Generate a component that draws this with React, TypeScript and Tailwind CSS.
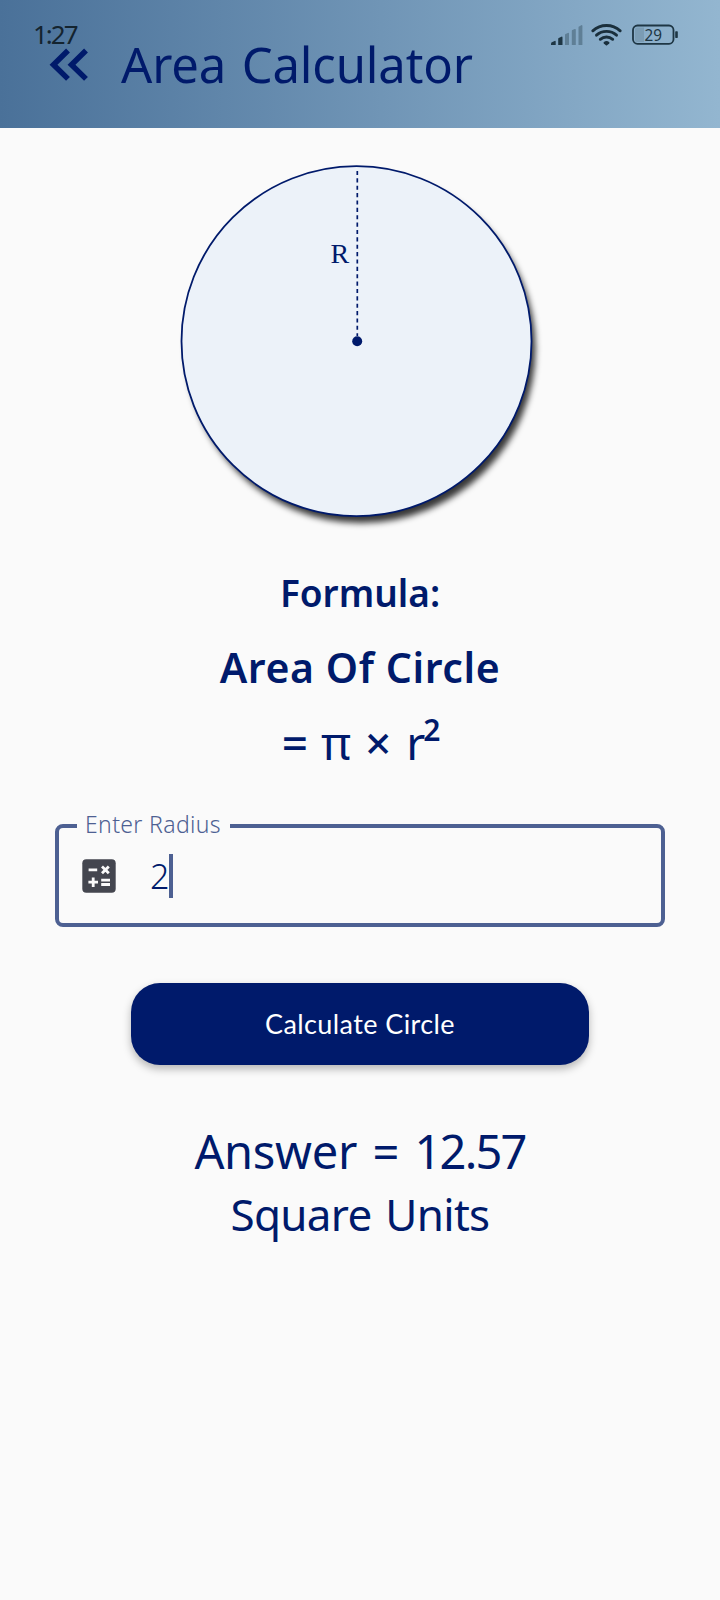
function StatusIcons() {
  return (
    <svg width="130" height="26" viewBox="0 0 130 26" fill="none" aria-hidden="true">
      <g fill="#1e3644">
        <path d="M1 21v-1.500a1.500 1.500 0 0 1 .8-1.200l2.800-1.400a.8.800 0 0 1 1.100.7V21z" />
        <path d="M8.200 21v-6a1 1 0 0 1 .6-.9l2.600-1.400a.8.800 0 0 1 1.100.7V21z" />
      </g>
      <g fill="#5f7f96">
        <path d="M15 21V11a1 1 0 0 1 .6-.9l2.300-1.200a.8.800 0 0 1 1.100.7V21z" />
        <path d="M21.800 21V7a1 1 0 0 1 .6-.9L24.700 5a.8.800 0 0 1 1.100.7V21z" />
        <path d="M28.500 21V3.300a1 1 0 0 1 .6-.9l2.200-1.200a.8.800 0 0 1 1.100.7V21z" />
      </g>
      <g stroke="#1a2f3c" strokeWidth="2.900" strokeLinecap="round">
        <path d="M42.800 6.800a20.500 20.500 0 0 1 27.400 0" />
        <path d="M46.500 11.200a15 15 0 0 1 20 0" />
        <path d="M50.300 15.300a9.500 9.500 0 0 1 12.400 0" />
      </g>
      <path d="M55.900 21.300l-2.100-1.900a1 1 0 0 1 .1-1.400a4 4 0 0 1 5.200 0a1 1 0 0 1 .1 1.400l-2.100 1.900a.9.900 0 0 1-1.200 0z" fill="#1a2f3c" />
      <path d="M87 3.500h7v14.500h-7a2 2 0 0 1-2-2v-10.500a2 2 0 0 1 2-2z" fill="#7b9cb4" />
      <rect x="83" y="1.500" width="40.500" height="18.300" rx="4.500" stroke="#1e3644" strokeWidth="1.800" />
      <rect x="125.200" y="7.300" width="2.600" height="6.600" rx="0.600" fill="#1e3644" />
      <text x="94.500" y="16.700" fontFamily="Noto Sans, sans-serif" fontSize="16.500" textLength="17.500" lengthAdjust="spacingAndGlyphs" fill="#1e3644">
        29
      </text>
    </svg>
  );
}

function Header() {
  return (
    <header className="relative h-32 bg-linear-to-r from-[#4a7199] to-[#93b6d0] pt-[32px]">
      <div className="absolute inset-x-0 top-[24px] flex items-start justify-between pl-[33px] pr-[40px] text-[#14242f]">
        <span className="-mt-[2px] text-[26px] leading-[24px] tracking-[-2px]">1:27</span>
        <StatusIcons />
      </div>
      <div className="flex items-start">
        <svg className="ml-[48px] mt-[15px] shrink-0" width="42" height="36" viewBox="0 0 42 36" fill="none" stroke="#001a6b" strokeWidth="5.500" aria-hidden="true">
          <path d="M20 3.500L5.500 17.700L20 31.900M38 3.500L23.500 17.700L38 31.900" />
        </svg>
        <h1 className="ml-[31px] whitespace-nowrap text-[49px] leading-[64px] tracking-[-0.150px] [word-spacing:3px]">Area Calculator</h1>
      </div>
    </header>
  );
}

function CircleFigure() {
  return (
    <svg className="block" width="720" height="420" viewBox="0 0 720 420" aria-hidden="true">
      <defs>
        <filter id="shade" x="-10%" y="-10%" width="120%" height="125%">
          <feGaussianBlur stdDeviation="3.200" />
        </filter>
      </defs>
      <circle cx="361" cy="220.500" r="174.500" fill="#000" fillOpacity="0.780" filter="url(#shade)" />
      <circle cx="356.500" cy="213.200" r="175" fill="#ecf2f9" stroke="#001a6b" strokeWidth="1.800" />
      <path d="M357.300 43V208" stroke="#001a6b" strokeWidth="1.700" strokeDasharray="4.100 3.270" />
      <circle cx="357.200" cy="213.300" r="5" fill="#001a6b" />
      <text x="330.500" y="134.500" fontFamily="Liberation Serif, serif" fontSize="28" fill="#001a6b">
        R
      </text>
    </svg>
  );
}

function CalculatorIcon() {
  return (
    <svg width="34" height="34" viewBox="0 0 34 34" fill="none" stroke="#fafafa" strokeWidth="2.800" aria-hidden="true">
      <rect x="0.300" y="0.300" width="33.400" height="33.400" rx="4" fill="#44464f" stroke="none" />
      <path d="M6.600 10.900h8.600M20 7.400l6.800 6.800M26.800 7.400l-6.800 6.800M6.400 23.200h9.600M11.200 18.400v9.600M19.200 21.100h8.800M19.200 25.500h8.800" />
    </svg>
  );
}

export default function App() {
  return (
    <div className="flex min-h-[1600px] w-[720px] flex-col bg-[#fafafa] font-['Noto_Sans',sans-serif] text-[#001a6b]">
      <Header />
      <main className="flex flex-col items-center">
        <CircleFigure />
        <h2 className="mt-[19px] text-[37px] font-semibold leading-[52px]">Formula:</h2>
        <h3 className="mt-5 text-[41px] font-semibold leading-[56px] tracking-[0.600px]">Area Of Circle</h3>
        <p className="mt-[17px] flex h-[60px] whitespace-pre pl-[2px] text-[46px] leading-[60px]">
          <span className="font-medium">= </span>
          <span className="ml-[1px]">π </span>
          <span className="ml-[2px] font-medium">× </span>
          <span className="ml-[3px]">r</span>
          <span className="-ml-[2px] text-[30px] font-semibold leading-[36px]">2</span>
        </p>

        <div className="relative mt-[52px] flex h-[103px] w-[610px] items-center rounded-lg border-4 border-[#4d6092] pl-[23px]">
          <label htmlFor="radius" className="absolute -top-[20px] left-[18px] bg-[#fafafa] pl-[8px] pr-[9px] text-[23px] font-light leading-[32px] tracking-[0.350px] text-[#4d6092]">
            Enter Radius
          </label>
          <CalculatorIcon />
          <span id="radius" className="ml-[34px] text-[34px] font-light leading-[44px]">2</span>
          <span className="h-[44px] w-1 bg-[#4d6092]" />
        </div>

        <button className="mt-14 h-[82px] w-[458px] rounded-[29px] bg-[#001a6b] pt-px font-[Lato,sans-serif] text-[27px] tracking-[0.400px] text-white shadow-[0_4px_8px_rgba(0,0,0,0.280)]">
          Calculate Circle
        </button>

        <p className="mt-[56px] text-[47px] leading-[60px] tracking-[-0.300px] [word-spacing:3.500px]">
          Answer = <span className="tracking-[-1.800px]">12.57</span>
        </p>
        <p className="mt-[3px] text-[44px] leading-[60px] tracking-[-0.700px] [word-spacing:3px]">Square Units</p>
      </main>
    </div>
  );
}
